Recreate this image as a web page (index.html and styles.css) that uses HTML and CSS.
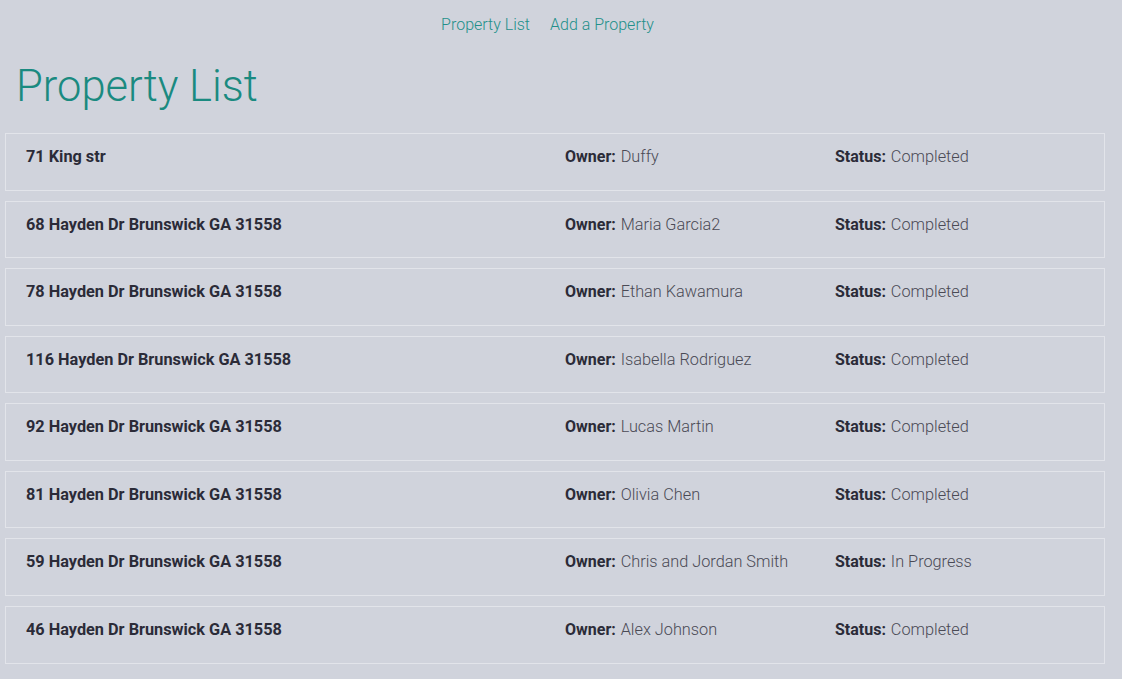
FILE: index.html
```html
<!DOCTYPE html>
<html>
<head>
<meta charset="utf-8">
<link rel="stylesheet" href="styles.css">
</head>
<body>
<nav class="nav">
  <a href="#" class="nav-link">Property List</a>
  <a href="#" class="nav-link">Add a Property</a>
</nav>
<h1 class="title">Property List</h1>
<div class="list">
  <div class="card"><div class="addr">71 King str</div><div class="field"><b>Owner:</b> <span class="val">Duffy</span></div><div class="field"><b>Status:</b> <span class="val">Completed</span></div></div>
  <div class="card"><div class="addr">68 Hayden Dr Brunswick GA 31558</div><div class="field"><b>Owner:</b> <span class="val">Maria Garcia2</span></div><div class="field"><b>Status:</b> <span class="val">Completed</span></div></div>
  <div class="card"><div class="addr">78 Hayden Dr Brunswick GA 31558</div><div class="field"><b>Owner:</b> <span class="val">Ethan Kawamura</span></div><div class="field"><b>Status:</b> <span class="val">Completed</span></div></div>
  <div class="card"><div class="addr">116 Hayden Dr Brunswick GA 31558</div><div class="field"><b>Owner:</b> <span class="val">Isabella Rodriguez</span></div><div class="field"><b>Status:</b> <span class="val">Completed</span></div></div>
  <div class="card"><div class="addr">92 Hayden Dr Brunswick GA 31558</div><div class="field"><b>Owner:</b> <span class="val">Lucas Martin</span></div><div class="field"><b>Status:</b> <span class="val">Completed</span></div></div>
  <div class="card"><div class="addr">81 Hayden Dr Brunswick GA 31558</div><div class="field"><b>Owner:</b> <span class="val">Olivia Chen</span></div><div class="field"><b>Status:</b> <span class="val">Completed</span></div></div>
  <div class="card"><div class="addr">59 Hayden Dr Brunswick GA 31558</div><div class="field"><b>Owner:</b> <span class="val">Chris and Jordan Smith</span></div><div class="field"><b>Status:</b> <span class="val">In Progress</span></div></div>
  <div class="card"><div class="addr">46 Hayden Dr Brunswick GA 31558</div><div class="field"><b>Owner:</b> <span class="val">Alex Johnson</span></div><div class="field"><b>Status:</b> <span class="val">Completed</span></div></div>
</div>
</body>
</html>
```
FILE: styles.css
```css
html, body {
  margin: 0;
  padding: 0;
  background: #d0d3dc;
  font-family: Roboto, "Liberation Sans", sans-serif;
  font-size: 16px;
  color: #4a4a55;
}
.nav {
  display: flex;
  justify-content: center;
  gap: 20px;
  padding-top: 15px;
  padding-right: 27px;
  height: 24px;
  line-height: 20px;
}
.nav-link {
  color: #23908a;
  text-decoration: none;
  font-weight: 300;
  font-size: 16px;
}
.title {
  margin: 21px 0 0 16px;
  font-size: 43.5px;
  font-weight: 300;
  color: #1a8a80;
  line-height: 53px;
  height: 70px;
}
.list {
  padding: 3px 17px 0 5px;
}
.card {
  box-sizing: border-box;
  height: 57.57px;
  margin-bottom: 10px;
  border: 1px solid #e2e4ea;
  display: grid;
  grid-template-columns: 539px 270px 1fr;
  align-items: start;
  padding: 13px 20px 0 20px;
  line-height: 20px;
}
.addr {
  font-weight: 700;
  font-size: 16.3px;
  color: #2b2b38;
}
.field {
  font-weight: 300;
  color: #4a4a55;
}
.val {
  font-size: 16.3px;
  margin-left: 1px;
}
.field b {
  font-weight: 700;
  color: #2b2b38;
}
```
